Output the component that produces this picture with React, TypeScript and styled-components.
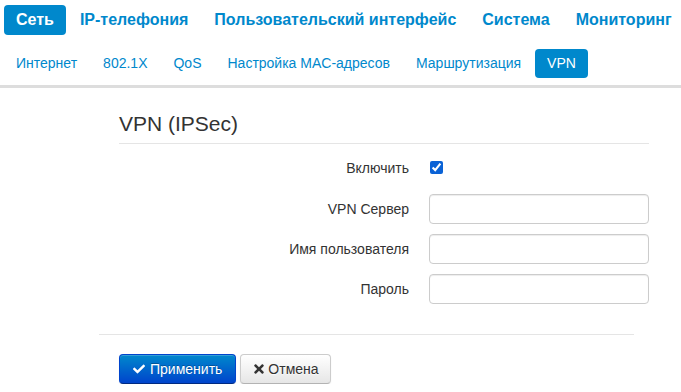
import React from "react";
import styled, { createGlobalStyle } from "styled-components";
import { FaCheck, FaTimes } from "react-icons/fa";

const Global = createGlobalStyle`
  html, body { margin: 0; padding: 0; background: #fff; }
  body { font-family: "Liberation Sans", Arial, sans-serif; color: #333; }
`;

const Header = styled.header`
  display: flex;
  flex-direction: column;
`;

const TopNav = styled.nav`
  display: flex;
  gap: 2px;
  padding: 5px 0 0 4px;
`;

const TopLink = styled.a<{ $active?: boolean }>`
  display: block;
  height: 30px;
  line-height: 30px;
  padding: 0 12px;
  border-radius: 4px;
  font-size: 16px;
  font-weight: bold;
  white-space: nowrap;
  text-decoration: none;
  color: ${(p) => (p.$active ? "#fff" : "#0088cc")};
  background: ${(p) => (p.$active ? "#0088cc" : "transparent")};
`;

const SubNav = styled.nav`
  display: flex;
  gap: 2px;
  margin-top: 14px;
  padding: 0 0 7px 4px;
  border-bottom: 3px solid #dddddd;
`;

const SubLink = styled.a<{ $active?: boolean }>`
  display: block;
  height: 29px;
  line-height: 29px;
  padding: 0 12px;
  border-radius: 4px;
  font-size: 14px;
  white-space: nowrap;
  text-decoration: none;
  color: ${(p) => (p.$active ? "#fff" : "#0088cc")};
  background: ${(p) => (p.$active ? "#0088cc" : "transparent")};
`;

const Main = styled.main`
  padding-left: 99px;
`;

const FormSection = styled.section`
  margin-left: 20px;
  width: 530px;
`;

const Heading = styled.h2`
  margin: 21px 0 0;
  padding-bottom: 4px;
  border-bottom: 1px solid #e5e5e5;
  font-size: 21px;
  line-height: 30px;
  font-weight: normal;
  color: #333;
`;

const Fields = styled.div`
  display: flex;
  flex-direction: column;
  gap: 10px;
  margin-top: 8px;
`;

const Row = styled.div<{ $tall?: boolean }>`
  display: grid;
  grid-template-columns: 290px 1fr;
  column-gap: 20px;
  align-items: center;
  height: ${(p) => (p.$tall ? "32px" : "30px")};
`;

const Label = styled.label`
  text-align: right;
  font-size: 14px;
  color: #333;
`;

const Check = styled.input`
  margin: 2px 0 0 1px;
  width: 13px;
  height: 13px;
  accent-color: #0a62d6;
`;

const TextInput = styled.input`
  box-sizing: border-box;
  width: 220px;
  height: 30px;
  border: 1px solid #cccccc;
  border-radius: 4px;
  box-shadow: inset 0 1px 1px rgba(0, 0, 0, 0.075);
  font: 14px "Liberation Sans", Arial, sans-serif;
  padding: 4px 6px;
`;

const Divider = styled.hr`
  width: 535px;
  margin: 30px 0 0;
  border: 0;
  border-top: 1px solid #e5e5e5;
`;

const ButtonBar = styled.div`
  display: flex;
  gap: 4px;
  margin: 19px 0 0 20px;
`;

const Button = styled.button<{ $primary?: boolean }>`
  display: flex;
  align-items: center;
  gap: ${(p) => (p.$primary ? "5px" : "2px")};
  box-sizing: border-box;
  height: 30px;
  padding: ${(p) => (p.$primary ? "0 13px" : "0 11px")};
  border-radius: 4px;
  font: 14px "Liberation Sans", Arial, sans-serif;
  cursor: pointer;
  color: ${(p) => (p.$primary ? "#fff" : "#333")};
  background: ${(p) =>
    p.$primary
      ? "linear-gradient(to bottom, #0088cc, #0044cc)"
      : "linear-gradient(to bottom, #ffffff, #e6e6e6)"};
  border: 1px solid ${(p) => (p.$primary ? "#0044cc" : "#cccccc")};
  border-bottom-color: ${(p) => (p.$primary ? "#002a80" : "#b3b3b3")};
  text-shadow: ${(p) =>
    p.$primary ? "0 -1px 0 rgba(0,0,0,0.25)" : "0 1px 1px rgba(255,255,255,0.75)"};
  box-shadow: inset 0 1px 0 rgba(255, 255, 255, 0.2), 0 1px 2px rgba(0, 0, 0, 0.05);
`;

export default function App() {
  const top = ["Сеть", "IP-телефония", "Пользовательский интерфейс", "Система", "Мониторинг"];
  const sub = ["Интернет", "802.1X", "QoS", "Настройка MAC-адресов", "Маршрутизация", "VPN"];
  return (
    <>
      <Global />
      <Header>
        <TopNav>
          {top.map((t, i) => (
            <TopLink key={t} $active={i === 0}>
              {t}
            </TopLink>
          ))}
        </TopNav>
        <SubNav>
          {sub.map((t) => (
            <SubLink key={t} $active={t === "VPN"}>
              {t}
            </SubLink>
          ))}
        </SubNav>
      </Header>
      <Main>
        <FormSection>
          <Heading>VPN (IPSec)</Heading>
          <Fields>
            <Row $tall>
              <Label>Включить</Label>
              <div>
                <Check type="checkbox" defaultChecked />
              </div>
            </Row>
            <Row>
              <Label>VPN Сервер</Label>
              <TextInput type="text" />
            </Row>
            <Row>
              <Label>Имя пользователя</Label>
              <TextInput type="text" />
            </Row>
            <Row>
              <Label>Пароль</Label>
              <TextInput type="password" />
            </Row>
          </Fields>
        </FormSection>
        <Divider />
        <ButtonBar>
          <Button $primary>
            <FaCheck size={12} />
            Применить
          </Button>
          <Button>
            <FaTimes size={14} />
            Отмена
          </Button>
        </ButtonBar>
      </Main>
    </>
  );
}
